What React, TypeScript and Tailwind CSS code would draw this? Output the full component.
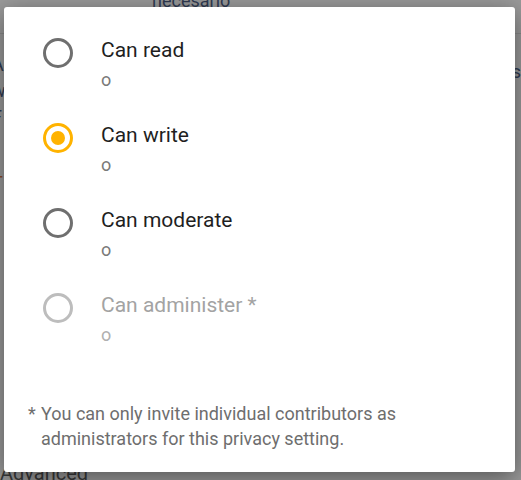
const OPTIONS = [
  { label: "Can read", sub: "o", checked: false, disabled: false },
  { label: "Can write", sub: "o", checked: true, disabled: false },
  { label: "Can moderate", sub: "o", checked: false, disabled: false },
  { label: "Can administer *", sub: "o", checked: false, disabled: true },
];

function Radio({ checked, disabled }: { checked: boolean; disabled: boolean }) {
  const ring = disabled ? "border-[#bdbdbd]" : checked ? "border-[#ffb300]" : "border-[#6f6f6f]";
  return (
    <span className={`grid size-[30px] shrink-0 place-items-center rounded-full border-[3px] ${ring}`}>
      {checked && <span className="size-[14px] rounded-full bg-[#ffb300]" />}
    </span>
  );
}

export default function App() {
  return (
    <div className="relative h-[480px] w-[521px] overflow-hidden bg-[#9a9a9a] font-['Roboto',sans-serif]">
      {/* page behind the dialog */}
      <div className="flex h-full flex-col text-[#2f3a52]">
        <p className="-mt-[9px] pl-[152px] text-[18px] leading-[20px]">necesario</p>
        <div className="mt-[22px] border-t border-[#8a8a8a]" />
        <div className="flex flex-1 justify-between">
          <div className="flex flex-col pt-[18px] text-[18px] leading-[26px]">
            <span className="-ml-[8px]">A</span>
            <span className="-ml-[8px]">w</span>
            <span className="-ml-[8px]">F</span>
            <span className="-ml-[8px] mt-[40px] text-[#8a4a2a]">T</span>
          </div>
          <span className="pt-[24px] text-[18px]">s</span>
        </div>
        <p className="-mb-[4px] text-[20px] leading-[22px] text-[#3a3a3a]">Advanced</p>
      </div>

      {/* dialog */}
      <div className="absolute left-[4px] top-[7px] flex h-[465px] w-[511px] flex-col rounded-[3px] bg-white pl-[39px] pt-[30px] shadow-[0_6px_24px_rgba(0,0,0,0.45)]">
        {OPTIONS.map((o) => (
          <div key={o.label} className="flex h-[85px] items-start gap-[28px]">
            <span className="mt-[1px]">
              <Radio checked={o.checked} disabled={o.disabled} />
            </span>
            <div className="flex flex-col">
              <span className={`text-[21px] leading-[26px] ${o.disabled ? "text-[#a3a3a3]" : "text-[#1f1f1f]"}`}>
                {o.label}
              </span>
              <span className={`mt-[6px] text-[18px] leading-[22px] ${o.disabled ? "text-[#b0b0b0]" : "text-[#7a7a7a]"}`}>
                {o.sub}
              </span>
            </div>
          </div>
        ))}

        <div className="-ml-[15px] mt-[24px] flex text-[18px] leading-[25px] text-[#6e6e6e]">
          <span className="w-[13px] shrink-0">*</span>
          <p className="w-[420px]">You can only invite individual contributors as administrators for this privacy setting.</p>
        </div>
      </div>
    </div>
  );
}
